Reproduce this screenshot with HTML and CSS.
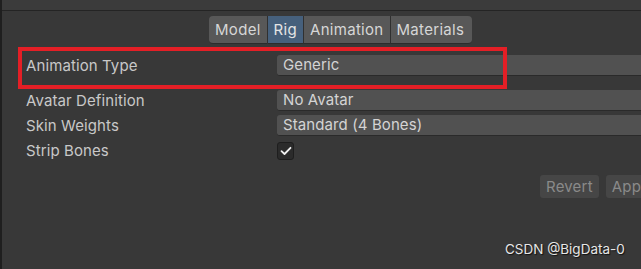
FILE: index.html
```html
<!DOCTYPE html>
<html lang="en">
<head>
    <meta charset="UTF-8">
    <title>Import Settings – Rig</title>
    <link rel="stylesheet" href="styles.css">
</head>
<body>
    <div class="inspector">
        <div class="topbar"></div>
        <div class="tabs">
            <div class="tab">Model</div>
            <div class="tab active">Rig</div>
            <div class="tab">Animation</div>
            <div class="tab">Materials</div>
        </div>
        <div class="row first">
            <div class="label">Animation Type</div>
            <div class="field">Generic</div>
        </div>
        <div class="row second">
            <div class="label">Avatar Definition</div>
            <div class="field">No Avatar</div>
        </div>
        <div class="row">
            <div class="label">Skin Weights</div>
            <div class="field">Standard (4 Bones)</div>
        </div>
        <div class="row check-row">
            <div class="label">Strip Bones</div>
            <div class="checkbox">
                <svg width="12" height="10" viewBox="0 0 12 10">
                    <path d="M1.5 5.2 L4.5 8 L10.5 1.8" fill="none" stroke="#f0f0f0" stroke-width="1.8" stroke-linecap="round" stroke-linejoin="round"/>
                </svg>
            </div>
        </div>
        <div class="actions">
            <button class="btn">Revert</button>
            <button class="btn">Apply</button>
        </div>
        <div class="highlight"></div>
        <div class="watermark">CSDN @BigData-0</div>
    </div>
</body>
</html>
```

FILE: styles.css
```css
body {
    margin: 0;
    padding: 0;
    background: #383838;
    font-family: Inter, "Noto Sans", sans-serif;
    font-size: 15px;
    color: #c8c8c8;
    overflow: hidden;
}
.inspector {
    position: relative;
    width: 639px;
    height: 269px;
    border-left: 2px solid #1f1f1f;
    overflow: hidden;
}
.topbar {
    height: 10px;
    background: #3b3b3b;
    border-bottom: 1px solid #242424;
}
.tabs {
    display: flex;
    margin: 5px 0 0 207px;
    height: 28px;
}
.tab {
    background: #585858;
    color: #d6d6d6;
    padding: 0 6px;
    letter-spacing: 0.3px;
    line-height: 27px;
    border-right: 1px solid #303030;
    border-bottom: 1px solid #2c2c2c;
    white-space: nowrap;
}
.tab:first-child {
    border-radius: 4px 0 0 4px;
}
.tab:last-child {
    border-right: none;
    padding-right: 8px;
    border-radius: 0 4px 4px 0;
}
.tab.active {
    background: #46607c;
    color: #e4e4e4;
}
.row {
    display: flex;
    align-items: center;
    margin-top: 4px;
    padding-left: 24px;
}
.row.first {
    margin-top: 11px;
}
.row.second {
    margin-top: 14px;
}
.label {
    width: 251px;
    flex-shrink: 0;
    white-space: nowrap;
    letter-spacing: 0.1px;
}
.field {
    width: 400px;
    flex-shrink: 0;
    height: 20px;
    line-height: 20px;
    padding-left: 6px;
    background: #515151;
    border-bottom: 1px solid #2a2a2a;
    border-radius: 3px;
    color: #d4d4d4;
    white-space: nowrap;
    letter-spacing: 0.1px;
}
.check-row {
    margin-top: 5px;
}
.checkbox {
    width: 15px;
    height: 16px;
    background: #2b2b2b;
    border: 1px solid #1e1e1e;
    border-radius: 3px;
    display: flex;
    align-items: center;
    justify-content: center;
}
.actions {
    display: flex;
    gap: 7px;
    margin: 15px 0 0 538px;
}
.btn {
    font-family: Inter, "Noto Sans", sans-serif;
    font-size: 15px;
    letter-spacing: 0.2px;
    background: #464646;
    color: #8a8a8a;
    border: none;
    border-radius: 3px;
    height: 23px;
    padding: 0 6px;
    white-space: nowrap;
    flex-shrink: 0;
}
.highlight {
    position: absolute;
    left: 16px;
    top: 47px;
    width: 481px;
    height: 34px;
    border: 4px solid #e41f26;
}
.watermark {
    position: absolute;
    left: 503px;
    top: 241px;
    font-size: 13.5px;
    color: #e6e6e6;
    text-shadow: 1px 1px 1px #111;
    white-space: nowrap;
}
```
